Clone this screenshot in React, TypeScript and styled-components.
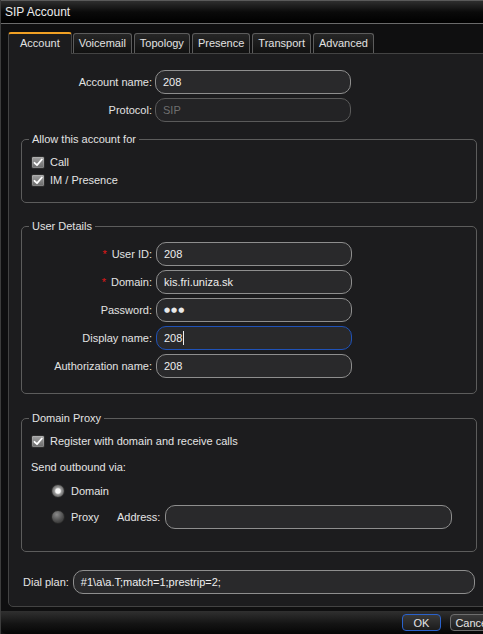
import React from "react";
import styled, { createGlobalStyle, css } from "styled-components";

const Global = createGlobalStyle`
  html, body { margin: 0; padding: 0; background: #000; }
  body {
    font-family: "Liberation Sans", Arial, sans-serif;
    font-size: 11px;
    color: #e4e4e4;
    overflow: hidden;
  }
  * { box-sizing: border-box; }
`;

const Viewport = styled.div`
  width: 483px;
  height: 634px;
  overflow: hidden;
  background: #0f0f10;
`;

const Dialog = styled.div`
  width: 500px;
  height: 634px;
  display: flex;
  flex-direction: column;
  background: #0f0f10;
  border-left: 1px solid #3c3c3c;
`;

const TitleBar = styled.div`
  flex: none;
  height: 24px;
  display: flex;
  align-items: center;
  padding-left: 4px;
  border-top: 1px solid #5a5a5a;
  border-bottom: 1px solid #6a6a6a;
  background: linear-gradient(#2e2e2e, #0a0a0a 50%, #000);
  font-size: 12px;
  color: #ececec;
`;

const Body = styled.div`
  flex: none;
  padding: 8px 0 0 7px;
  display: flex;
  flex-direction: column;
`;

const TabBar = styled.div`
  display: flex;
  align-items: flex-end;
  height: 21px;
`;

const Tab = styled.div<{ $active?: boolean }>`
  height: 20px;
  padding: 0 5px 1px;
  margin-right: 2px;
  display: flex;
  align-items: center;
  border: 1px solid #5c5c5c;
  border-bottom: none;
  border-radius: 3px 3px 0 0;
  background: linear-gradient(#262626, #111);
  color: #e2e2e2;
  ${(p) =>
    p.$active &&
    css`
      height: 22px;
      padding: 0 11px 2px;
      margin-right: 1px;
      margin-bottom: -1px;
      position: relative;
      z-index: 1;
      background: #1c1c1e;
      border-color: #434343;
      border-top: 2px solid #f0a024;
    `}
`;

const Panel = styled.div`
  width: 482px;
  background: #1c1c1e;
  border: 1px solid #434343;
  border-radius: 0 4px 4px 5px;
  padding: 16px 12px 12px 12px;
  display: flex;
  flex-direction: column;
`;

const FormGrid = styled.div<{ $labelWidth: number; $gap: number }>`
  display: grid;
  grid-template-columns: ${(p) => p.$labelWidth}px 196px;
  column-gap: ${(p) => p.$gap}px;
  row-gap: 4px;
  align-items: center;
`;

const Label = styled.div`
  text-align: right;
  white-space: nowrap;
  color: #e2e2e2;
`;

const Req = styled.span`
  color: #e01818;
  margin-right: 5px;
`;

const Field = styled.div<{ $disabled?: boolean; $focused?: boolean; $width?: number }>`
  height: 24px;
  ${(p) => (p.$width ? `width: ${p.$width}px;` : "")}
  border: 1px solid #8e8e8e;
  border-radius: 10px;
  background: #29292b;
  padding: 0 7px;
  display: flex;
  align-items: center;
  white-space: nowrap;
  overflow: hidden;
  color: #eeeeee;
  ${(p) =>
    p.$disabled &&
    css`
      border-color: #5a5a5a;
      background: #232325;
      color: #6f6f6f;
    `}
  ${(p) =>
    p.$focused &&
    css`
      border-color: #1f52b8;
    `}
`;

const Caret = styled.span`
  display: inline-block;
  width: 1px;
  height: 14px;
  background: #eee;
  margin-left: 1px;
`;

const Dots = styled.span`
  font-family: "DejaVu Sans", sans-serif;
  font-size: 7px;
  letter-spacing: 1px;
  color: #e8e8e8;
`;

const Group = styled.fieldset<{ $top: number; $pb: number; $pt: number }>`
  margin: ${(p) => p.$top}px 0 0 0;
  border: 1px solid #5c5c5c;
  border-radius: 5px;
  padding: ${(p) => p.$pt}px 9px ${(p) => p.$pb}px 9px;
  min-width: 0;
`;

const Legend = styled.legend`
  padding: 0 3px;
  margin-left: -2px;
  line-height: 13px;
  color: #e2e2e2;
`;

const CheckRow = styled.div`
  height: 18px;
  display: flex;
  align-items: center;
  gap: 5px;
`;

const CheckBox = styled.span`
  width: 14px;
  height: 13px;
  flex: none;
  border: 1px solid #2c2c2c;
  border-radius: 2px;
  background: linear-gradient(#a2a2a2, #6a6a6a);
  box-shadow: inset 0 0 0 1px rgba(255, 255, 255, 0.15);
  display: inline-flex;
  align-items: center;
  justify-content: center;
`;

const TextLine = styled.div`
  height: 18px;
  margin-top: 8px;
  display: flex;
  align-items: center;
`;

const RadioRow = styled.div<{ $height: number; $top: number }>`
  height: ${(p) => p.$height}px;
  margin-top: ${(p) => p.$top}px;
  display: flex;
  align-items: center;
  gap: 6px;
  padding-left: 20px;
`;

const Radio = styled.span<{ $checked?: boolean }>`
  width: 14px;
  height: 14px;
  flex: none;
  border-radius: 50%;
  border: 1px solid #262626;
  background: radial-gradient(circle at 40% 30%, #8a8a8a, #4a4a4a 60%, #2e2e2e);
  ${(p) =>
    p.$checked &&
    css`
      border-color: #2a2a2a;
      background: radial-gradient(
        circle at 50% 50%,
        #f8f8f8 0 2.2px,
        #d0d0d0 2.8px,
        #9a9a9a 3.6px,
        #7c7c7c 5px,
        #5a5a5a 6.5px
      );
    `}
`;

const RadioLabel = styled.span<{ $width?: number }>`
  ${(p) => (p.$width ? `width: ${p.$width}px;` : "")}
`;

const InlineLabel = styled.span`
  margin-right: -1px;
`;

const DialRow = styled.div`
  margin-top: 18px;
  padding: 0 2px;
  display: flex;
  align-items: center;
  gap: 4px;
`;

const Grow = styled(Field)`
  flex: 1;
`;

const Footer = styled.div`
  margin-top: 4px;
  flex: 1;
  background: linear-gradient(#303030, #141414 55%, #050505);
  border-radius: 0 0 0 6px;
  display: flex;
  justify-content: flex-end;
  align-items: flex-start;
  gap: 9px;
  padding: 3px 5px 0 0;
`;

const Button = styled.div<{ $default?: boolean; $width: number }>`
  width: ${(p) => p.$width}px;
  height: 17px;
  border: 1px solid #6e6e6e;
  border-radius: 4px;
  background: linear-gradient(#3a3a3a, #1c1c1c);
  color: #e4e4e4;
  display: flex;
  align-items: center;
  justify-content: center;
  ${(p) =>
    p.$default &&
    css`
      border-color: #2a62cc;
    `}
`;

const Check = () => (
  <svg width="10" height="9" viewBox="0 0 10 9">
    <path d="M1.5 4.8 L4 7.2 L8.8 1.5" fill="none" stroke="#fff" strokeWidth="1.8" strokeLinecap="round" strokeLinejoin="round" />
  </svg>
);

const CheckItem = ({ label }: { label: string }) => (
  <CheckRow>
    <CheckBox>
      <Check />
    </CheckBox>
    <span>{label}</span>
  </CheckRow>
);

const tabs = ["Account", "Voicemail", "Topology", "Presence", "Transport", "Advanced"];

export default function App() {
  return (
    <Viewport>
      <Global />
      <Dialog>
        <TitleBar>SIP Account</TitleBar>
        <Body>
          <TabBar>
            {tabs.map((t, i) => (
              <Tab key={t} $active={i === 0}>
                {t}
              </Tab>
            ))}
          </TabBar>
          <Panel>
            <FormGrid $labelWidth={131} $gap={3}>
              <Label>Account name:</Label>
              <Field>208</Field>
              <Label>Protocol:</Label>
              <Field $disabled>SIP</Field>
            </FormGrid>

            <Group $top={11} $pt={7} $pb={13}>
              <Legend>Allow this account for</Legend>
              <CheckItem label="Call" />
              <CheckItem label="IM / Presence" />
            </Group>

            <Group $top={17} $pt={9} $pb={15}>
              <Legend>User Details</Legend>
              <FormGrid $labelWidth={121} $gap={4}>
                <Label>
                  <Req>*</Req>User ID:
                </Label>
                <Field>208</Field>
                <Label>
                  <Req>*</Req>Domain:
                </Label>
                <Field>kis.fri.uniza.sk</Field>
                <Label>Password:</Label>
                <Field>
                  <Dots>●●●</Dots>
                </Field>
                <Label>Display name:</Label>
                <Field $focused>
                  208
                  <Caret />
                </Field>
                <Label>Authorization name:</Label>
                <Field>208</Field>
              </FormGrid>
            </Group>

            <Group $top={18} $pt={7} $pb={22}>
              <Legend>Domain Proxy</Legend>
              <CheckItem label="Register with domain and receive calls" />
              <TextLine>Send outbound via:</TextLine>
              <RadioRow $height={18} $top={6}>
                <Radio $checked />
                <RadioLabel>Domain</RadioLabel>
              </RadioRow>
              <RadioRow $height={24} $top={5}>
                <Radio />
                <RadioLabel $width={40}>Proxy</RadioLabel>
                <InlineLabel>Address:</InlineLabel>
                <Field $width={287} />
              </RadioRow>
            </Group>

            <DialRow>
              <span>Dial plan:</span>
              <Grow>#1\a\a.T;match=1;prestrip=2;</Grow>
            </DialRow>
          </Panel>
        </Body>
        <Footer>
          <Button $default $width={39}>
            OK
          </Button>
          <Button $width={45}>Cancel</Button>
        </Footer>
      </Dialog>
    </Viewport>
  );
}
